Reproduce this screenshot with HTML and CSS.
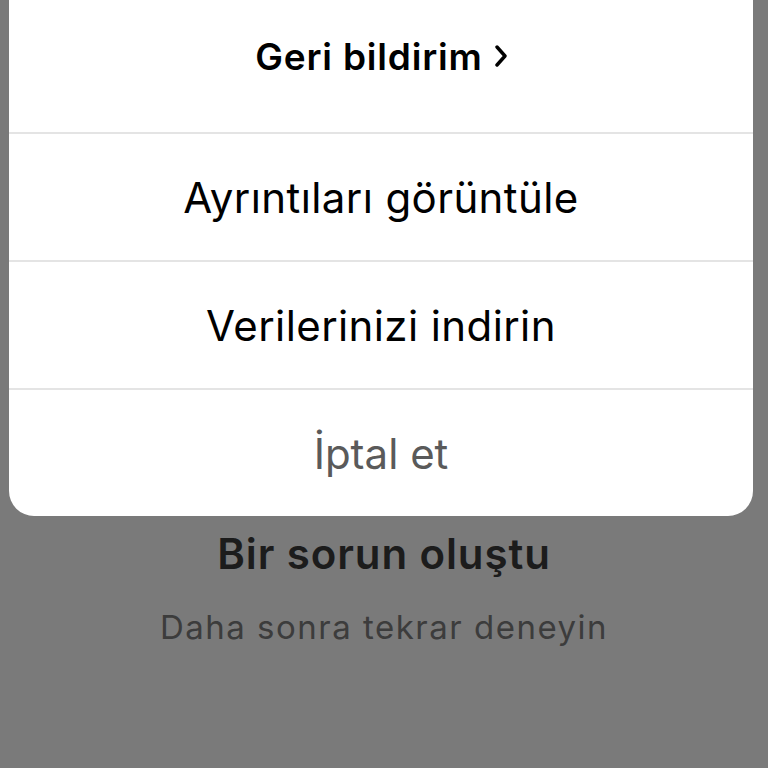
FILE: index.html
```html
<!DOCTYPE html>
<html lang="tr">
<head>
<meta charset="utf-8">
<link rel="stylesheet" href="styles.css">
</head>
<body>
<div class="screen">
  <div class="sheet">
    <div class="row row-first"><span class="label bold">Geri bildirim</span><svg class="chev" viewBox="0 0 12 22" width="12" height="22"><path d="M2 2 L10 11 L2 20" fill="none" stroke="#000" stroke-width="3.4" stroke-linecap="round" stroke-linejoin="round"/></svg></div>
    <div class="row"><span class="label">Ayrıntıları görüntüle</span></div>
    <div class="row"><span class="label">Verilerinizi indirin</span></div>
    <div class="row row-cancel"><span class="label cancel">İptal et</span></div>
  </div>
  <div class="error">
    <div class="error-title">Bir sorun oluştu</div>
    <div class="error-sub">Daha sonra tekrar deneyin</div>
  </div>
</div>
</body>
</html>
```
FILE: styles.css
```css
html, body {
  margin: 0;
  padding: 0;
  background: #7a7a7a;
}
.screen {
  width: 768px;
  height: 768px;
  overflow: hidden;
  font-family: Inter, "Liberation Sans", Arial, sans-serif;
}
.sheet {
  margin-left: 9px;
  width: 744px;
  background: #fff;
  border-radius: 0 0 25px 25px;
  display: flex;
  flex-direction: column;
}
.row {
  height: 128px;
  display: flex;
  align-items: center;
  justify-content: center;
  border-bottom: 2px solid #e4e4e4;
  box-sizing: border-box;
}
.row-first {
  height: 134px;
  padding-bottom: 20px;
}
.row-cancel {
  height: 126px;
  border-bottom: none;
}
.label {
  font-size: 42px;
  color: #000;
  letter-spacing: 0.4px;
}
.bold {
  font-weight: 600;
  font-size: 37px;
  letter-spacing: 0.8px;
}
.chev {
  margin-left: 12px;
  margin-top: 0;
}
.cancel {
  color: #5a5a5a;
  letter-spacing: 0;
}
.error {
  display: flex;
  flex-direction: column;
  align-items: center;
}
.error-title {
  margin-top: 12px;
  font-size: 42px;
  font-weight: 600;
  color: #1c1c1c;
  letter-spacing: 0.9px;
}
.error-sub {
  margin-top: 28px;
  font-size: 33px;
  color: #3c3c3c;
  letter-spacing: 1.5px;
}
```
